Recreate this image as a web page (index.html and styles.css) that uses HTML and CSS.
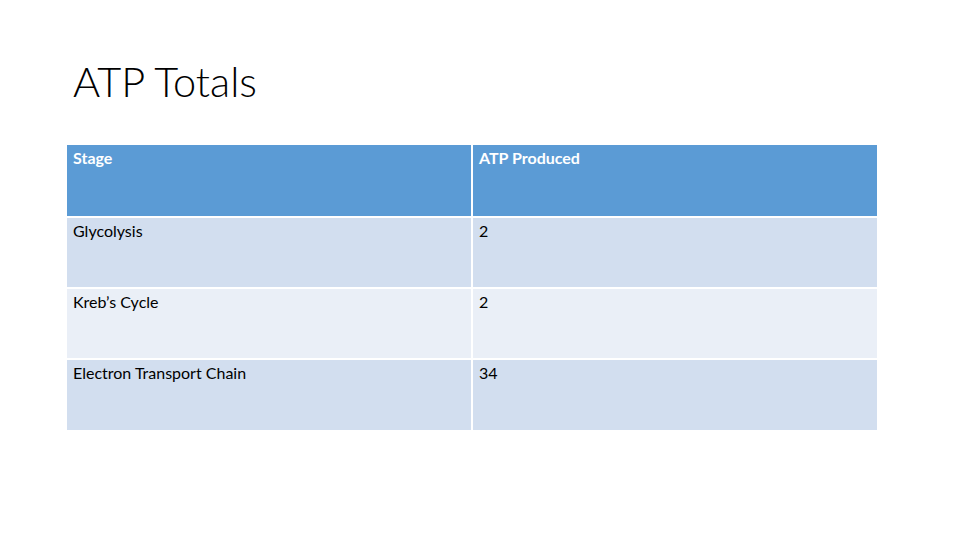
FILE: index.html
```html
<!DOCTYPE html>
<html>
<head>
<meta charset="utf-8">
<link rel="stylesheet" href="styles.css">
</head>
<body>
<div class="slide">
  <h1 class="title">ATP Totals</h1>
  <table class="atp">
    <thead>
      <tr><th>Stage</th><th>ATP Produced</th></tr>
    </thead>
    <tbody>
      <tr class="odd"><td>Glycolysis</td><td>2</td></tr>
      <tr class="even"><td>Kreb’s Cycle</td><td>2</td></tr>
      <tr class="odd"><td>Electron Transport Chain</td><td>34</td></tr>
    </tbody>
  </table>
</div>
</body>
</html>
```
FILE: styles.css
```css
html, body {
  margin: 0;
  padding: 0;
  background: #ffffff;
}
.slide {
  width: 960px;
  height: 540px;
  box-sizing: border-box;
  padding: 56px 0 0 67px;
  font-family: Lato, "Open Sans", sans-serif;
}
.title {
  margin: 0 0 0 6px;
  font-weight: 300;
  font-size: 41.5px;
  line-height: 50px;
  color: #000;
}
.atp {
  margin-top: 39px;
  border-collapse: collapse;
  width: 810px;
  table-layout: fixed;
}
.atp th, .atp td {
  border: 2px solid #ffffff;
  box-sizing: border-box;
  vertical-align: top;
  text-align: left;
  padding: 3px 6px;
  font-size: 16px;
  line-height: 19px;
  color: #000;
}
.atp th { height: 72px; }
.atp td { height: 71px; }
.atp th:first-child, .atp td:first-child { width: 405px; }
.atp th {
  background: #5b9bd5;
  color: #ffffff;
  font-weight: 700;
}
.atp tr.odd td { background: #d2deef; }
.atp tr.even td { background: #eaeff7; }
.atp tr > :first-child { border-left: none; }
.atp tr > :last-child { border-right: none; }
.atp thead tr th { border-top: none; }
.atp tbody tr:last-child td { border-bottom: none; }
```
